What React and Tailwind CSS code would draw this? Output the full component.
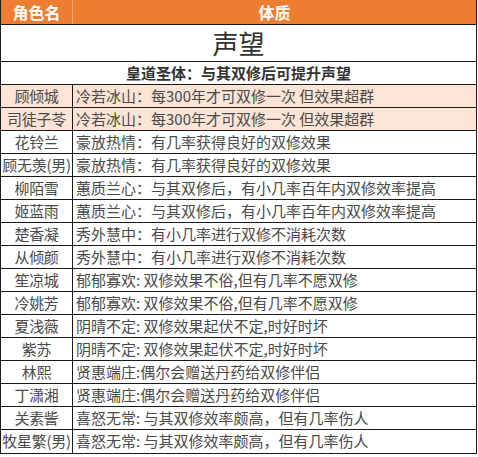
const rows = [
  { name: "顾倾城", text: "冷若冰山：每300年才可双修一次 但效果超群", hi: true },
  { name: "司徒子苓", text: "冷若冰山：每300年才可双修一次 但效果超群", hi: true },
  { name: "花铃兰", text: "豪放热情：有几率获得良好的双修效果" },
  { name: "顾无羡(男)", text: "豪放热情：有几率获得良好的双修效果" },
  { name: "柳陌雪", text: "蕙质兰心：与其双修后，有小几率百年内双修效率提高" },
  { name: "姬蓝雨", text: "蕙质兰心：与其双修后，有小几率百年内双修效率提高" },
  { name: "楚香凝", text: "秀外慧中：有小几率进行双修不消耗次数" },
  { name: "从倾颜", text: "秀外慧中：有小几率进行双修不消耗次数" },
  { name: "笙凉城", text: "郁郁寡欢: 双修效果不俗,但有几率不愿双修" },
  { name: "冷姚芳", text: "郁郁寡欢: 双修效果不俗,但有几率不愿双修" },
  { name: "夏浅薇", text: "阴晴不定: 双修效果起伏不定,时好时坏" },
  { name: "紫苏", text: "阴晴不定: 双修效果起伏不定,时好时坏" },
  { name: "林熙", text: "贤惠端庄:偶尔会赠送丹药给双修伴侣" },
  { name: "丁潇湘", text: "贤惠端庄:偶尔会赠送丹药给双修伴侣" },
  { name: "关素訾", text: "喜怒无常: 与其双修效率颇高，但有几率伤人" },
  { name: "牧星繁(男)", text: "喜怒无常: 与其双修效率颇高，但有几率伤人" },
]

function App() {
  return (
    <div
      className="min-h-screen bg-white"
      style={{ fontFamily: '"Noto Sans CJK SC", "Noto Sans", sans-serif' }}
    >
      <div className="w-[477px] border-x border-b border-[#1a1a1a]">
        <div className="flex h-[25px] border-b border-[#1a1a1a] bg-[#ed7d31] text-[16px] font-bold text-white">
          <div className="flex w-[72px] shrink-0 items-center justify-center border-r border-[#f3a776]">
            角色名
          </div>
          <div className="flex flex-1 items-center justify-center">体质</div>
        </div>

        <div className="flex h-[37px] items-center justify-center border-b border-[#1a1a1a] text-[26px] leading-none text-[#333]">
          声望
        </div>

        <div className="flex h-[23px] items-center justify-center border-b border-[#1a1a1a] text-[15px] font-bold text-[#333]">
          皇道圣体：与其双修后可提升声望
        </div>

        {rows.map((r, i) => (
          <div
            key={i}
            className={
              "flex h-[23px] text-[#4a4a4a] " +
              (i < rows.length - 1 ? "border-b border-[#1a1a1a] " : "") +
              (r.hi ? "bg-[#fce4d6]" : "bg-white")
            }
          >
            <div className="flex w-[72px] shrink-0 items-center justify-center whitespace-nowrap border-r border-[#1a1a1a] text-[15px] tracking-[-0.3px]">
              {r.name}
            </div>
            <div className="flex flex-1 items-center whitespace-nowrap pl-[3px] text-[15px]">
              {r.text}
            </div>
          </div>
        ))}
      </div>
    </div>
  )
}

export default App
